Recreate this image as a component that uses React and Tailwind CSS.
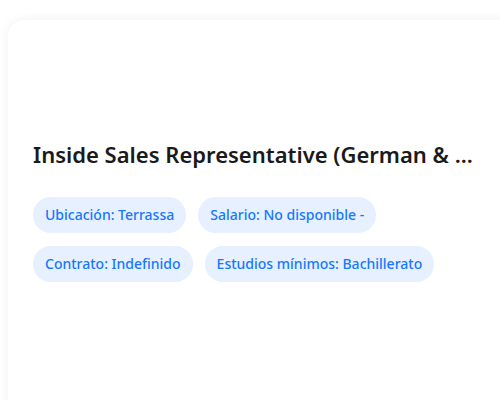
export default function App() {
  const tags = [
    "Ubicación: Terrassa",
    "Salario: No disponible -",
    "Contrato: Indefinido",
    "Estudios mínimos: Bachillerato",
  ];
  return (
    <div
      className="h-[400px] w-[500px] overflow-hidden bg-white pl-2 pt-5"
      style={{ fontFamily: '"Noto Sans", "Open Sans", sans-serif' }}
    >
      <div className="h-[420px] w-[520px] rounded-2xl bg-white pl-[25px] pr-6 pt-[114px] shadow-[0_0_12px_rgba(0,0,0,0.06)]">
        <h2 className="w-[460px] truncate text-[22px] font-semibold leading-[40px] text-[#1a1a1a]">
          Inside Sales Representative (German &amp; ...
        </h2>
        <div className="mt-[23px] flex w-[452px] flex-wrap gap-x-3 gap-y-[13px]">
          {tags.map((t) => (
            <span
              key={t}
              className="flex h-9 items-center rounded-full bg-[#e6f0ff] px-3 text-sm font-medium text-[#1677ff]"
            >
              {t}
            </span>
          ))}
        </div>
      </div>
    </div>
  );
}
